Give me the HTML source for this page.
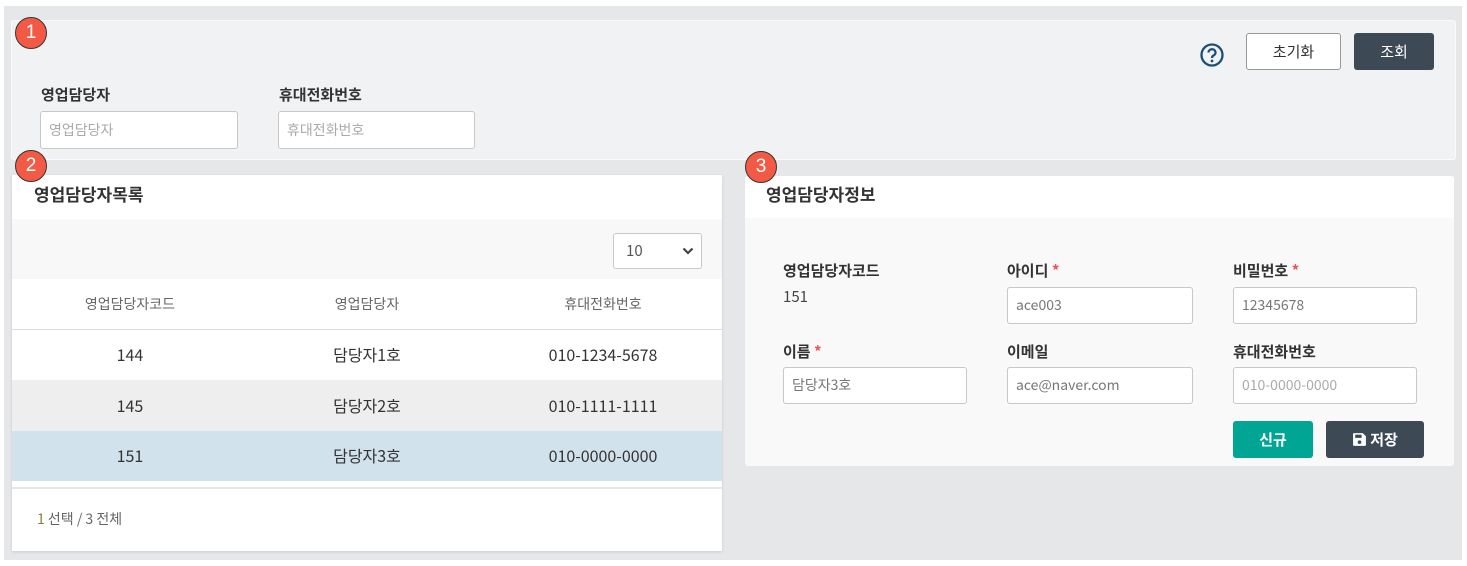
<!DOCTYPE html>
<html><head><meta charset="utf-8"><style>
*{box-sizing:border-box;margin:0;padding:0}
body{width:1467px;height:566px;background:#fff;font-family:"Noto Sans CJK KR","Liberation Sans",sans-serif;line-height:1.2;position:relative;overflow:hidden;color:#333}
.a{position:absolute}
.bg{left:4px;top:6px;width:1458px;height:554px;background:#e6e7e9}
.p1{left:11px;top:20px;width:1445px;height:140px;background:#f1f2f4;border:1px solid #fafafa;border-radius:3px}
.p2{left:12px;top:175px;width:710px;height:376px;background:#fff;box-shadow:0 1px 3px rgba(0,0,0,.12)}
.p3{left:745px;top:176px;width:709px;height:290px;background:#f9f9f9;border-radius:3px;overflow:hidden}
.badge{width:32px;height:32px;border-radius:50%;background:#f25a45;border:1px solid #333;color:#fff;font-size:19px;text-align:center;line-height:29px;font-family:"Liberation Sans",sans-serif}
.lbl{font-size:15px;font-weight:bold;color:#333}
.inp{background:#fff;border:1px solid #c8c8c8;border-radius:3px;font-size:14px;color:#777;padding-left:8px;display:flex;align-items:center}
.ph{color:#aaa}
.star{color:#f05050}
.btn{border-radius:3px;font-size:15px;display:flex;align-items:center;justify-content:center}
.cell{position:absolute;text-align:center;width:236px;font-size:16px;color:#333}
</style></head><body>
<div class="a bg"></div>
<div class="a p1"></div>
<div class="a badge" style="left:15px;top:17px">1</div>
<svg class="a" style="left:1199px;top:42px" width="26" height="26" viewBox="0 0 26 26"><circle cx="13" cy="13" r="10.5" fill="none" stroke="#1d4f76" stroke-width="2.3"/><path d="M9.5 10.5a3.5 3.3 0 1 1 5 3c-1.2.7-1.5 1.2-1.5 2.5" fill="none" stroke="#1d4f76" stroke-width="2.3"/><circle cx="13" cy="19" r="1.4" fill="#1d4f76"/></svg>
<div class="a btn" style="left:1246px;top:33px;width:95px;height:37px;background:#fff;border:1px solid #999;color:#333">초기화</div>
<div class="a btn" style="left:1354px;top:33px;width:80px;height:37px;background:#3d4a56;color:#fff">조회</div>
<div class="a lbl" style="left:41px;top:86px">영업담당자</div>
<div class="a lbl" style="left:279px;top:86px">휴대전화번호</div>
<div class="a inp ph" style="left:40px;top:111px;width:198px;height:38px">영업담당자</div>
<div class="a inp ph" style="left:278px;top:111px;width:197px;height:38px">휴대전화번호</div>

<div class="a p2"></div>
<div class="a" style="left:12px;top:219px;width:710px;height:60px;background:#f8f8f8"></div>
<div class="a" style="left:613px;top:233px;width:89px;height:36px;background:#fff;border:1px solid #c8c8c8;border-radius:3px;font-size:15px;color:#555;padding:8px 0 0 12px">10<svg class="a" style="left:68px;top:12px" width="12" height="10" viewBox="0 0 12 10"><path d="M1.5 2.5l4.5 4.5 4.5-4.5" fill="none" stroke="#444" stroke-width="2.2"/></svg></div>
<div class="a" style="left:12px;top:329px;width:710px;height:1px;background:#ddd"></div>
<div class="a" style="left:12px;top:380px;width:710px;height:51px;background:#eeeeee"></div>
<div class="a" style="left:12px;top:431px;width:710px;height:50px;background:#d2e2ec"></div>
<div class="a" style="left:12px;top:487px;width:710px;height:2px;background:#e6e6e6"></div>
<div class="cell" style="left:12px;top:296px;font-size:14px;color:#666">영업담당자코드</div>
<div class="cell" style="left:249px;top:296px;font-size:14px;color:#666">영업담당자</div>
<div class="cell" style="left:485px;top:296px;font-size:14px;color:#666">휴대전화번호</div>
<div class="cell" style="left:12px;top:345px">144</div>
<div class="cell" style="left:249px;top:345px">담당자1호</div>
<div class="cell" style="left:485px;top:345px">010-1234-5678</div>
<div class="cell" style="left:12px;top:396px">145</div>
<div class="cell" style="left:249px;top:396px">담당자2호</div>
<div class="cell" style="left:485px;top:396px">010-1111-1111</div>
<div class="cell" style="left:12px;top:446px">151</div>
<div class="cell" style="left:249px;top:446px">담당자3호</div>
<div class="cell" style="left:485px;top:446px">010-0000-0000</div>
<div class="a" style="left:37px;top:511px;font-size:14px;color:#666"><span style="color:#8a7a3a">1</span> 선택 / 3 전체</div>
<div class="a" style="left:34px;top:184px;font-size:17px;font-weight:bold;color:#333">영업담당자목록</div>
<div class="a badge" style="left:15px;top:150px">2</div>

<div class="a p3"><div style="height:42px;background:#fff"></div></div>
<div class="a" style="left:766px;top:184px;font-size:17px;font-weight:bold;color:#333">영업담당자정보</div>
<div class="a badge" style="left:745px;top:151px">3</div>
<div class="a lbl" style="left:783px;top:262px">영업담당자코드</div>
<div class="a" style="left:783px;top:288px;font-size:15px;color:#444">151</div>
<div class="a lbl" style="left:1007px;top:262px">아이디 <span class="star">*</span></div>
<div class="a lbl" style="left:1233px;top:262px">비밀번호 <span class="star">*</span></div>
<div class="a inp" style="left:1007px;top:287px;width:186px;height:37px">ace003</div>
<div class="a inp" style="left:1233px;top:287px;width:184px;height:37px">12345678</div>
<div class="a lbl" style="left:783px;top:343px">이름 <span class="star">*</span></div>
<div class="a lbl" style="left:1007px;top:343px">이메일</div>
<div class="a lbl" style="left:1233px;top:343px">휴대전화번호</div>
<div class="a inp" style="left:783px;top:367px;width:184px;height:37px">담당자3호</div>
<div class="a inp" style="left:1007px;top:367px;width:186px;height:37px">ace@naver.com</div>
<div class="a inp ph" style="left:1233px;top:367px;width:184px;height:37px">010-0000-0000</div>
<div class="a btn" style="left:1233px;top:421px;width:80px;height:37px;background:#00a693;color:#fff;font-weight:bold">신규</div>
<div class="a btn" style="left:1326px;top:421px;width:98px;height:37px;background:#3d4a56;color:#fff;font-weight:bold"><svg width="15" height="15" viewBox="0 0 14 14" style="margin-right:3px"><path d="M1 2a1 1 0 0 1 1-1h8l3 3v8a1 1 0 0 1-1 1H2a1 1 0 0 1-1-1z" fill="#fff"/><rect x="3" y="2.5" width="6" height="3" fill="#3d4a56"/><circle cx="7" cy="9.5" r="1.7" fill="#3d4a56"/></svg>저장</div>
</body></html>
